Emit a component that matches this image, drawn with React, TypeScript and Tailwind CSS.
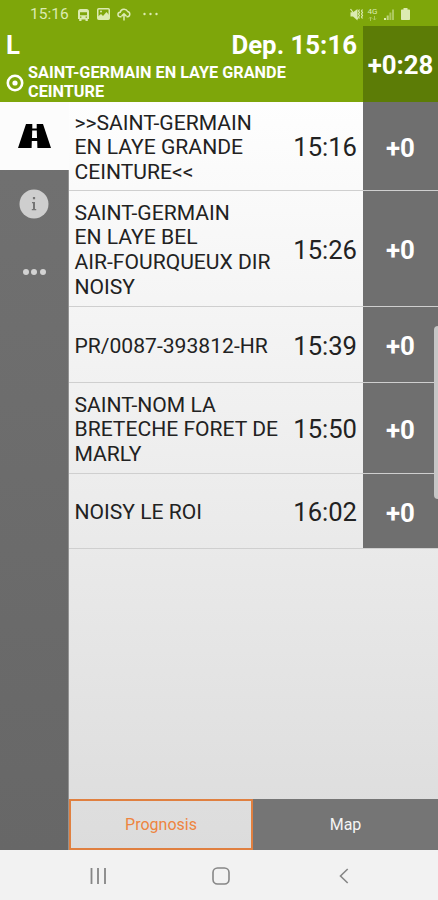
import React, { useState } from 'react';

const stops = [
  { id: 1, lines: ['>>SAINT-GERMAIN', 'EN LAYE GRANDE', 'CEINTURE<<'], time: '15:16', delay: '+0', height: 'h-[89px]' },
  { id: 2, lines: ['SAINT-GERMAIN', 'EN LAYE BEL', 'AIR-FOURQUEUX DIR', 'NOISY'], time: '15:26', delay: '+0', height: 'h-[116px]' },
  { id: 3, lines: ['PR/0087-393812-HR'], time: '15:39', delay: '+0', height: 'h-[76px]' },
  { id: 4, lines: ['SAINT-NOM LA', 'BRETECHE FORET DE', 'MARLY'], time: '15:50', delay: '+0', height: 'h-[91px]' },
  { id: 5, lines: ['NOISY LE ROI'], time: '16:02', delay: '+0', height: 'h-[75px]' },
];

const tabs = [
  { name: 'Prognosis', width: 'w-[184px]' },
  { name: 'Map', width: 'w-[185px]' },
];

const StatusBar = () => (
  <div className="h-[26px] shrink-0 flex items-center justify-between pl-[30px] pr-[28px] pt-[2px] text-[#dcebb2]">
    <div className="flex items-center">
      <span className="w-[39px] pt-[2px] text-[15.5px] leading-none whitespace-nowrap">15:16</span>
      {/* Train */}
      <svg className="ml-[9px] mt-[2px] w-[11px] h-[12px]" viewBox="0 0 11 12" fill="currentColor">
        <path fillRule="evenodd" d="M2.5 0h6Q11 0 11 2.5V10H9.8v2H7.5V10.5h-4V12h-2.3V10H0V2.5Q0 0 2.5 0ZM2 3.2v3h7v-3ZM2 7.6v1.2h1.4V7.6ZM7.6 7.6v1.2H9V7.6Z" />
      </svg>
      {/* Picture */}
      <svg className="ml-[8px] w-[13px] h-[12px]" viewBox="0 0 13 12" fill="none" stroke="currentColor" strokeWidth="1.5">
        <rect x="0.75" y="0.75" width="11.5" height="10.5" rx="1" />
        <path d="M1 8.5 4 6l2 2 3.5-4L12 7v4H1Z" fill="currentColor" stroke="none" />
        <circle cx="4" cy="3.5" r="1" fill="currentColor" stroke="none" />
      </svg>
      {/* Cloud upload */}
      <svg className="ml-[7px] w-[14px] h-[13px]" viewBox="0 0 14 13" fill="none" stroke="currentColor" strokeWidth="1.5">
        <path d="M4.5 8.8H3.3A2.3 2.3 0 0 1 3.2 4.2 4 4 0 0 1 10.7 3.5 2.7 2.7 0 0 1 10.5 8.8H9.5M7 12.5V5.8M4.6 8.1 7 5.7l2.4 2.4" />
      </svg>
      <svg className="ml-[12px] w-[15px] h-[4px]" viewBox="0 0 15 4" fill="currentColor">
        <circle cx="1.5" cy="2" r="1.2" />
        <circle cx="7.5" cy="2" r="1.2" />
        <circle cx="13.5" cy="2" r="1.2" />
      </svg>
    </div>
    <div className="flex items-center">
      {/* Muted speaker with vibration */}
      <svg className="w-[14px] h-[13px]" viewBox="0 0 14 13" fill="none" stroke="currentColor" strokeWidth="1.2">
        <path d="M0.5 4.2H3L7.5 1v11.5L3 8.5H0.5Z" fill="currentColor" stroke="none" />
        <path d="M0.5 1 8 11" />
        <path d="M9.5 1.5l-1 1.5 1 1.5-1 1.5 1 1.5-1 1.5 1 1.5M12.5 1.5l-1 1.5 1 1.5-1 1.5 1 1.5-1 1.5 1 1.5" />
      </svg>
      <div className="ml-[3px] w-[11px] flex flex-col items-center">
        <span className="text-[8px] leading-[8px]">4G</span>
        <svg className="w-[9px] h-[5px] opacity-50" viewBox="0 0 9 5" fill="none" stroke="currentColor">
          <path d="M2.5 5V1M1 2.5 2.5 1 4 2.5M6.5 0v4M5 2.5 6.5 4 8 2.5" />
        </svg>
      </div>
      <svg className="ml-[6px] w-[10px] h-[11px]" viewBox="0 0 10 11" fill="currentColor">
        <rect x="0" y="9" width="2" height="2" />
        <rect x="2.7" y="6.5" width="2" height="4.5" opacity="0.7" />
        <rect x="5.4" y="3.5" width="2" height="7.5" opacity="0.5" />
        <rect x="8" y="0.5" width="2" height="10.5" opacity="0.5" />
      </svg>
      <svg className="ml-[7px] w-[9px] h-[12px]" viewBox="0 0 9 12" fill="currentColor">
        <path d="M2.5 0h4v1.500h1.700q.8 0 .8.8v8.900q0 .8-.8.8H.8q-.8 0-.8-.8V2.300q0-.8.8-.8H2.500Z" />
      </svg>
    </div>
  </div>
);

const Header = () => (
  <div className="h-[76px] shrink-0 flex text-white font-bold">
    <div className="w-[363px] flex flex-col">
      <div className="h-[38px] pt-[2px] flex items-center justify-between pl-[6px] pr-[6px] text-[25.8px] leading-none">
        <span>L</span>
        <span className="whitespace-nowrap">Dep. 15:16</span>
      </div>
      <div className="flex items-center pl-[6px]">
        <svg className="w-[18px] h-[18px]" viewBox="0 0 18 18" fill="none" stroke="currentColor" strokeWidth="2.6">
          <circle cx="9" cy="9" r="7.2" />
          <circle cx="9" cy="9" r="2.6" fill="currentColor" stroke="none" />
        </svg>
        <p className="ml-[4px] text-[16.25px] leading-[18.5px] whitespace-nowrap">
          SAINT-GERMAIN EN LAYE GRANDE
          <br />
          CEINTURE
        </p>
      </div>
    </div>
    <div className="flex-1 pt-[3px] bg-[#5c7c06] flex items-center justify-center text-[25.8px]">+0:28</div>
  </div>
);

const Sidebar = () => (
  <div className="w-[69px] shrink-0 flex flex-col items-center bg-linear-to-b from-[#717171] to-[#676767] border-r border-[#929292]">
    <button className="w-[69px] h-[68px] bg-[#fcfcfc] flex items-center justify-center">
      <svg className="w-[33px] h-[24px]" viewBox="0 0 33 24">
        <path d="M8 0h17l8 24H0Z" fill="#000" />
        <path d="M14.3 0h4.4v4.500h-4.400ZM14.200 6.500h4.600l.2 7.500h-5ZM13.800 17h5.400l.2 7h-5.800Z" fill="#fcfcfc" />
      </svg>
    </button>
    <button className="h-[68px] flex items-center justify-center">
      <svg className="w-[30px] h-[30px]" viewBox="0 0 30 30">
        <circle cx="15" cy="15" r="14.5" fill="#cecece" />
        <path d="M13.900 8h2.200v2.200h-2.200ZM13 13h3v7h1.200v1.200h-4.400v-1.200h1.200v-5.800h-1Z" fill="#747474" />
      </svg>
    </button>
    <button className="h-[68px] flex items-center justify-center gap-[2.5px]">
      <span className="w-[6px] h-[6px] rounded-full bg-[#d2d2d2]"></span>
      <span className="w-[6px] h-[6px] rounded-full bg-[#d2d2d2]"></span>
      <span className="w-[6px] h-[6px] rounded-full bg-[#d2d2d2]"></span>
    </button>
  </div>
);

const App = () => {
  const [tab, setTab] = useState('Prognosis');

  return (
    <div className="relative w-[438px] h-[900px] flex flex-col overflow-hidden bg-[#7ea60a] font-['Roboto',sans-serif]">
      <StatusBar />
      <Header />

      <div className="h-[748px] shrink-0 flex">
        <Sidebar />
        <div className="flex-1 flex flex-col bg-linear-to-b from-[#fefefe] to-[#dcdcdc]">
          <div className="flex-1">
            {stops.map((stop) => (
              <div key={stop.id} className={`${stop.height} flex border-b border-[#cfcfcf]`}>
                <div className="flex-1 flex items-center justify-between pl-[5.5px] pr-[6px] pt-[3px]">
                  <p className="text-[21.1px] leading-[24.6px] text-[#222222] whitespace-nowrap">
                    {stop.lines.map((line) => (
                      <span key={line} className="block">{line}</span>
                    ))}
                  </p>
                  <span className="pt-px text-[25.6px] leading-none text-[#222222]">{stop.time}</span>
                </div>
                <div className="w-[75px] pt-[4px] bg-[#6f6f6f] flex items-center justify-center text-[25.8px] font-bold text-white">
                  {stop.delay}
                </div>
              </div>
            ))}
          </div>

          <div className="h-[51px] flex">
            {tabs.map(({ name, width }) => (
              <button
                key={name}
                onClick={() => setTab(name)}
                className={`${width} text-[16px] pt-px ${
                  tab === name ? 'border-2 border-[#e08040] text-[#ee8440]' : 'bg-[#757575] text-[#f4f4f4]'
                }`}
              >
                {name}
              </button>
            ))}
          </div>
        </div>
      </div>

      {/* Android navigation bar */}
      <div className="h-[50px] shrink-0 bg-[#f2f2f2] text-[#868686] flex items-center pt-[2px] pl-[88px]">
        <svg className="w-[18px] h-[16px]" viewBox="0 0 18 16" stroke="currentColor" strokeWidth="1.8">
          <path d="M3.5 0v16M10 0v16M17 0v16" />
        </svg>
        <svg className="ml-[106px] w-[18px] h-[18px]" viewBox="0 0 18 18" fill="none" stroke="currentColor" strokeWidth="1.6">
          <rect x="1" y="1" width="16" height="16" rx="4.5" />
        </svg>
        <svg className="ml-[109px] w-[10px] h-[16px]" viewBox="0 0 10 16" fill="none" stroke="currentColor" strokeWidth="1.6">
          <path d="M8.7 1 1.5 8l7.2 7" />
        </svg>
      </div>

      {/* Edge panel handle */}
      <div className="absolute right-0 top-[326px] w-[4px] h-[173px] rounded-l-[4px] bg-[#c6c6c6]"></div>
    </div>
  );
};

export default App;
